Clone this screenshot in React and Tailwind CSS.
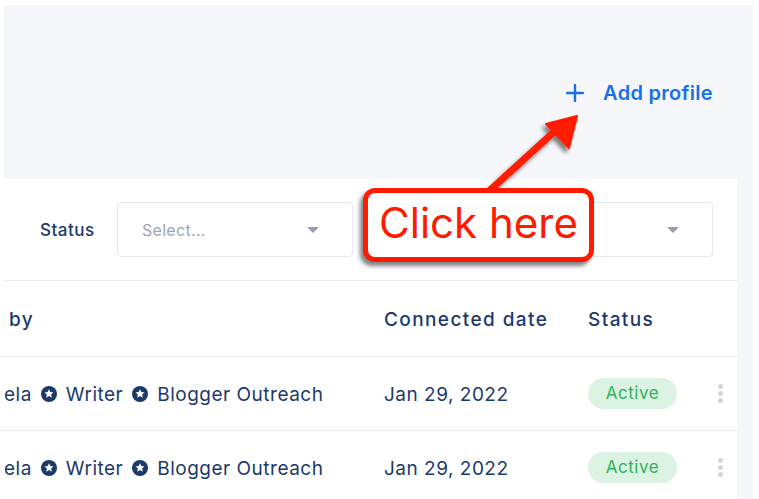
import React from "react";

const Star = () => (
  <svg width="16" height="16" viewBox="0 0 16 16" className="inline-block mx-[9px] -mt-[3px] align-middle">
    <circle cx="8" cy="8" r="8" fill="#1b3a6b" />
    <path d="M8 3.2l1.35 2.9 3.1.35-2.3 2.1.65 3.1L8 10.1l-2.8 1.55.65-3.1-2.3-2.1 3.1-.35z" fill="#fff" />
  </svg>
);

const Caret = () => (
  <svg width="14" height="8" viewBox="0 0 14 8">
    <path d="M1 1h12L7 7z" fill="#9a9bb0" />
  </svg>
);

const Kebab = () => (
  <div className="flex flex-col gap-[2px] items-center">
    <span className="w-[5px] h-[5px] rounded-full bg-[#d3d5dd]" />
    <span className="w-[5px] h-[5px] rounded-full bg-[#d3d5dd]" />
    <span className="w-[5px] h-[5px] rounded-full bg-[#d3d5dd]" />
  </div>
);

const Row = () => (
  <div className="h-[74px] border-t border-[#e9eaf2] flex items-center text-[19px] tracking-[0.5px] text-[#1b3a6b]">
    <div className="w-[384px] pl-[4px] pt-[3px] whitespace-nowrap">
      ela<Star />Writer<Star />Blogger Outreach
    </div>
    <div className="w-[204px] pt-[3px]">Jan 29, 2022</div>
    <div className="w-[130px]">
      <span className="inline-flex items-center justify-center w-[89px] h-[31px] rounded-full bg-[#dcf2e2] text-[#2eb35a] text-[17px]">Active</span>
    </div>
    <Kebab />
  </div>
);

export default function App() {
  return (
    <div
      className="w-[759px] h-[499px] bg-white pt-[5px] pl-[4px] pr-[6px] overflow-hidden relative"
      style={{ fontFamily: "Inter, 'Open Sans', sans-serif" }}
    >
      <div className="bg-[#f5f7fb] h-full flex flex-col">
        <div className="h-[174px] flex items-center justify-end pr-[40px] pt-[2px] shrink-0">
          <div className="flex items-center gap-[19px] text-[#1a6fe8]">
            <svg width="18" height="18" viewBox="0 0 18 18">
              <path d="M9 1v16M1 9h16" stroke="#1a6fe8" strokeWidth="2.4" strokeLinecap="round" />
            </svg>
            <span className="text-[20px] font-semibold tracking-[0.3px]">Add profile</span>
          </div>
        </div>
        <div className="bg-white w-[737px] -ml-[4px] flex-1">
          <div className="h-[102px] flex items-center border-b border-[#e9eaf2] ml-[4px]">
            <span className="w-[113px] pl-[36px] pt-[2px] text-[17px] tracking-[0.5px] font-medium text-[#1b3a6b]">Status</span>
            <div className="w-[236px] h-[55px] border border-[#e6e8f0] rounded-[4px] flex items-center justify-between pl-[24px] pr-[32px]">
              <span className="text-[16px] tracking-[0.3px] text-[#a0a3b6]">Select...</span>
              <Caret />
            </div>
            <div className="ml-[124px] w-[236px] h-[55px] border border-[#e6e8f0] rounded-[4px] flex items-center justify-end pr-[32px]">
              <Caret />
            </div>
          </div>
          <div className="h-[75px] pt-[3px] flex items-center text-[19px] tracking-[1.4px] font-medium text-[#1b3a6b]">
            <div className="w-[384px] pl-[9px]">by</div>
            <div className="w-[204px]">Connected date</div>
            <div>Status</div>
          </div>
          <Row />
          <Row />
        </div>
      </div>

      <svg className="absolute left-0 top-0 pointer-events-none" width="759" height="499">
        <defs>
          <filter id="sh" x="-20%" y="-20%" width="140%" height="140%">
            <feDropShadow dx="-3" dy="4" stdDeviation="2" floodColor="#000" floodOpacity="0.5" />
          </filter>
        </defs>
        <g filter="url(#sh)">
          <path d="M488 192L556 130" stroke="#ff1a00" strokeWidth="7" strokeLinecap="round" />
          <path d="M577 116L546 124L569 148Z" fill="#ff1a00" stroke="#ff1a00" strokeWidth="2" strokeLinejoin="round" />
        </g>
      </svg>

      <div className="absolute left-[363px] top-[188px] w-[231px] h-[74px] border-[5px] border-[#ff1a00] rounded-[12px] bg-white shadow-[-3px_4px_4px_rgba(0,0,0,0.5)] flex items-center justify-center">
        <span className="text-[42px] text-[#ff1a00] leading-none pb-[4px]">Click here</span>
      </div>
    </div>
  );
}
